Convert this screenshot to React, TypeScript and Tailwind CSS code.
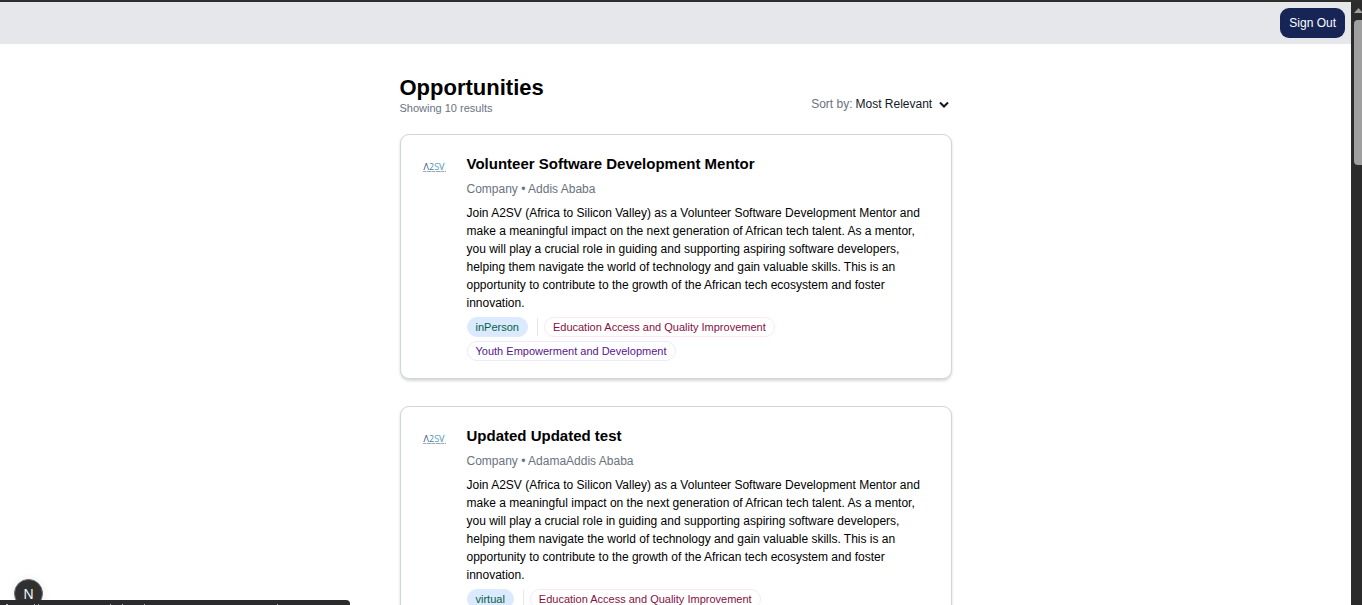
import React from "react";

type Tag = { label: string; tone: "rose" | "violet" };
type Opportunity = { title: string; place: string; mode: string; tags: Tag[] };

const description =
  "Join A2SV (Africa to Silicon Valley) as a Volunteer Software Development Mentor and make a meaningful impact on the next generation of African tech talent. As a mentor, you will play a crucial role in guiding and supporting aspiring software developers, helping them navigate the world of technology and gain valuable skills. This is an opportunity to contribute to the growth of the African tech ecosystem and foster innovation.";

const tags: Tag[] = [
  { label: "Education Access and Quality Improvement", tone: "rose" },
  { label: "Youth Empowerment and Development", tone: "violet" },
];

const opportunities: Opportunity[] = [
  { title: "Volunteer Software Development Mentor", place: "Addis Ababa", mode: "inPerson", tags },
  { title: "Updated Updated test", place: "AdamaAddis Ababa", mode: "virtual", tags },
];

const tones = {
  rose: "border-pink-100 text-pink-900",
  violet: "border-violet-100 text-purple-900",
};

function Logo({ id }: { id: string }) {
  return (
    <svg viewBox="0 0 30 30" className="h-[30px] w-[30px] shrink-0" role="img" aria-label="A2SV">
      <defs>
        <linearGradient id={id} gradientUnits="userSpaceOnUse" x1="3" y1="0" x2="27" y2="0">
          <stop offset="0" stopColor="#35346f" />
          <stop offset="0.35" stopColor="#4a74a8" />
          <stop offset="0.6" stopColor="#4fa3bb" />
          <stop offset="1" stopColor="#3f7fa6" />
        </linearGradient>
      </defs>
      <text x="15" y="17" textAnchor="middle" fontSize="9" fontFamily="'Open Sans', 'Noto Sans', sans-serif" fill={`url(#${id})`}>
        Λ2SV
      </text>
      <path d="M4 18.5H27" stroke="#8b9dbb" strokeWidth="0.9" strokeDasharray="3 0.6 5 0.5" />
    </svg>
  );
}

function Card({ item, id }: { item: Opportunity; id: string }) {
  return (
    <li className="flex gap-[18px] rounded-[9px] border border-gray-300 bg-white px-[18px] pt-[18px] pb-[17px] shadow-[0_2px_3px_rgba(0,0,0,0.16)]">
      <Logo id={id} />
      <div className="min-w-0 flex-1">
        <h2 className="text-[15px] leading-[22px] font-bold">{item.title}</h2>
        <p className="mt-[5px] leading-[18px] text-gray-500">Company • {item.place}</p>
        <p className="mt-[6px] leading-[18px]">{description}</p>
        <ul className="mt-[5px] flex flex-wrap gap-y-1 text-[11px] leading-[18px]">
          <li className="rounded-full border border-blue-100 bg-blue-100 px-2 text-emerald-800">{item.mode}</li>
          {item.tags.map((tag, i) => (
            <li key={tag.label} className="flex items-center">
              {i === 0 && <span className="mr-[6px] ml-[9px] h-[18px] w-px bg-gray-200" />}
              <span className={`rounded-full border px-2 ${tones[tag.tone]}`}>{tag.label}</span>
            </li>
          ))}
        </ul>
      </div>
    </li>
  );
}

export default function App() {
  return (
    <div className="flex h-screen overflow-hidden border-t-2 border-[#2e2e2e] bg-white font-['Liberation_Sans',Arial,sans-serif] text-[12px] text-black">
      <div className="min-w-0 flex-1">
        <header className="flex justify-end bg-gray-200 p-[6px]">
          <button type="button" className="h-[30px] rounded-[9px] bg-blue-950 px-[9px] text-white">
            Sign Out
          </button>
        </header>
        <main className="mx-auto max-w-[552px] pt-[30px]">
          <div className="mb-[18px] flex items-center justify-between">
            <div>
              <h1 className="text-[22px] leading-[27px] font-bold">Opportunities</h1>
              <p className="text-[11px] leading-[15px] text-gray-500">Showing 10 results</p>
            </div>
            <div className="flex items-center pt-[18px]">
              <label htmlFor="sort" className="text-gray-500">
                Sort by:
              </label>
              <div className="relative">
                <select id="sort" className="appearance-none bg-transparent pr-[19px] pl-[3px] text-gray-900">
                  <option>Most Relevant</option>
                </select>
                <svg viewBox="0 0 10 8" className="pointer-events-none absolute top-[6px] right-[3px] h-2 w-[10px]" fill="none" stroke="#101828" strokeWidth="2">
                  <path d="M1 1.5 5 5.5 9 1.5" />
                </svg>
              </div>
            </div>
          </div>
          <ul className="flex flex-col gap-[27px]">
            {opportunities.map((item, i) => (
              <Card key={item.title} item={item} id={`logo-${i}`} />
            ))}
          </ul>
        </main>
      </div>
      <div className="w-[11px] shrink-0 bg-[#2b2b2b] pl-[3px]" aria-hidden="true">
        <svg viewBox="0 0 8 18" className="h-[18px] w-2" fill="#a0a0a0">
          <path d="M0 11 4.5 6 9 11Z" />
        </svg>
        <div className="h-[145px] rounded-l-[4px] bg-[#9f9f9f]" />
      </div>
      <button
        type="button"
        aria-label="Open developer tools"
        className="absolute bottom-[-3px] left-[14px] flex h-[29px] w-[29px] items-center justify-center rounded-full border border-[#6b6b6b] bg-[#303030] text-[14px] leading-none text-gray-100 shadow-[0_0_8px_rgba(0,0,0,0.08)]"
      >
        N
      </button>
      <div className="absolute bottom-0 left-0 h-[5px] w-[350px] rounded-tr-[4px] bg-[#2b2b2d]" aria-hidden="true">
        <svg viewBox="0 0 350 5" className="h-[5px] w-[350px]" stroke="#b5b5b5" strokeWidth="1">
          <path d="M6 4.5H8M34 4.5H35M38 4.5H39M110 4.5H111M122 4.5H123M144 4.5H145M277 4.5H278" />
        </svg>
      </div>
    </div>
  );
}
